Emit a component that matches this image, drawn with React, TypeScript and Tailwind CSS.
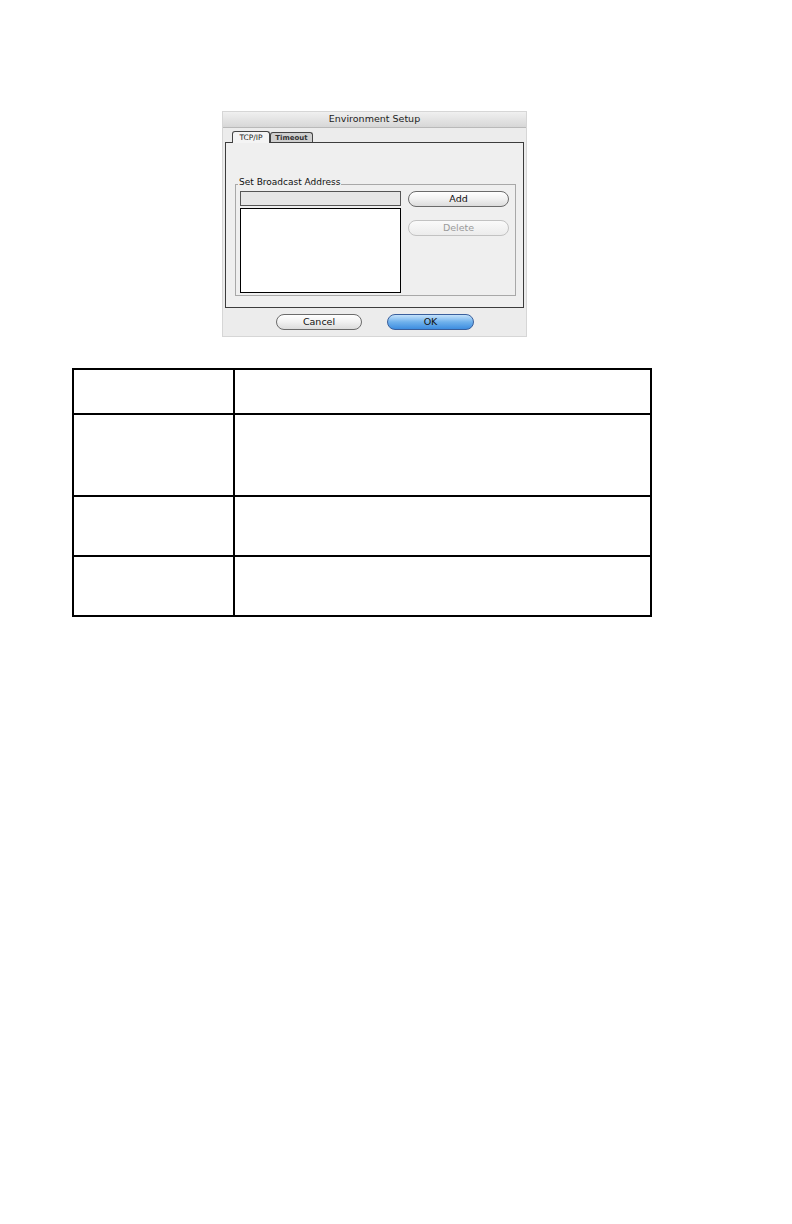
const ui = { fontFamily: '"DejaVu Sans", "Liberation Sans", sans-serif' };

function AquaButton({ label, variant = "normal", width }: { label: string; variant?: "normal" | "default" | "disabled"; width: string }) {
  const styles = {
    normal: "border-[#6b6b6b] bg-gradient-to-b from-white via-[#f1f1f1] to-[#dcdcdc] text-[#111]",
    default: "border-[#3a5f9c] bg-gradient-to-b from-[#c4e2fb] via-[#6fb1ec] to-[#3d8de0] text-[#111]",
    disabled: "border-[#c2c2c2] bg-gradient-to-b from-[#fafafa] to-[#ececec] text-[#9a9a9a]",
  }[variant];
  return (
    <div className={`${width} h-[16px] rounded-full border flex items-center justify-center text-[9.5px] leading-none ${styles}`}>
      {label}
    </div>
  );
}

function EnvironmentDialog() {
  return (
    <div className="w-[305px] h-[226px] bg-[#ececec] border border-[#d6d6d6] flex flex-col" style={ui}>
      {/* Title bar */}
      <div className="h-[16px] bg-gradient-to-b from-[#f0f0f0] to-[#d7d7d7] border-b border-[#b9b9b9] flex items-center justify-center text-[9.5px] text-[#222]">
        Environment Setup
      </div>

      {/* Tabs */}
      <div className="flex items-end pl-[9px] h-[14px] mt-[1px]">
        <div className="w-[38px] h-[12px] border border-b-0 border-[#444] rounded-t-[3px] bg-[#f4f4f4] flex items-center justify-center text-[7.5px] text-[#222] relative z-10">
          TCP/IP
        </div>
        <div className="w-[43px] h-[11px] border border-b-0 border-[#444] rounded-t-[3px] bg-[#cfcfcf] flex items-center justify-center text-[7px] font-semibold text-[#333]">
          Timeout
        </div>
      </div>

      {/* Tab panel */}
      <div className="mx-[2px] h-[166px] -mt-[1px] border border-[#3c3c3c] bg-[#efefef] flex flex-col pt-[41px] pl-[9px] pr-[7px]">
        <div className="relative h-[112px] border border-[#a8a8a8] flex gap-[7px] pl-[4px] pr-[6px] pt-[6px]">
          <span className="absolute -top-[7px] left-[2px] bg-[#efefef] px-[1px] text-[9px] leading-none text-[#111]">
            Set Broadcast Address
          </span>
          <div className="w-[163px] flex flex-col gap-[2px]">
            <div className="h-[15px] border border-[#555] bg-[#e6e6e6]" />
            <div className="h-[85px] border border-black bg-white" />
          </div>
          <div className="w-[101px] flex flex-col gap-[13px]">
            <AquaButton label="Add" width="w-[101px]" />
            <AquaButton label="Delete" variant="disabled" width="w-[101px]" />
          </div>
        </div>
      </div>

      {/* Footer buttons */}
      <div className="flex-1 flex items-center pl-[53px] gap-[25px]">
        <AquaButton label="Cancel" width="w-[86px]" />
        <AquaButton label="OK" variant="default" width="w-[87px]" />
      </div>
    </div>
  );
}

export default function App() {
  const rows = ["h-[45px]", "h-[82px]", "h-[60px]", "h-[60px]"];
  return (
    <div className="bg-white">
      <div className="pt-[111px] pl-[222px]">
        <EnvironmentDialog />
      </div>

      <table className="ml-[72px] mt-[31px] w-[580px] border-collapse">
        <tbody>
          {rows.map((h, i) => (
            <tr key={i} className={h}>
              <td className="w-[161px] border-2 border-black" />
              <td className="border-2 border-black" />
            </tr>
          ))}
        </tbody>
      </table>
    </div>
  );
}
